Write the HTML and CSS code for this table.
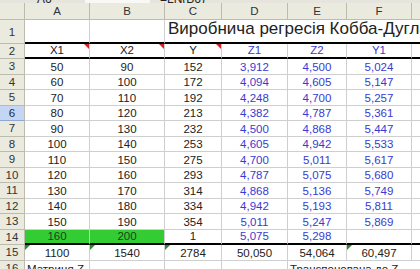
FILE: index.html
```html
<!DOCTYPE html>
<html>
<head>
<meta charset="utf-8">
<link rel="stylesheet" href="styles.css">
</head>
<body>
<div class="fbar">
  <span class="fb-name">A6</span>
  <span class="fb-box"></span>
  <span class="fb-formula">=LN(B6)</span>
</div>
<div class="sheet">
  <div class="corner"></div>
  <div class="ch">A</div><div class="ch">B</div><div class="ch">C</div><div class="ch">D</div><div class="ch">E</div><div class="ch">F</div><div class="ch last"></div>

  <div class="rh">1</div>
  <div class="c r1"></div><div class="c r1"></div>
  <div class="c r1 title">Виробнича регресія Кобба-Дуглас</div>

  <div class="rh">2</div>
  <div class="c r2 note">X1</div><div class="c r2 note">X2</div><div class="c r2 note">Y</div>
  <div class="c r2 blue">Z1</div><div class="c r2 blue">Z2</div><div class="c r2 blue">Y1</div><div class="c r2"></div>

  <div class="rh">3</div>
  <div class="c">50</div><div class="c">90</div><div class="c">152</div><div class="c blue">3,912</div><div class="c blue">4,500</div><div class="c blue">5,024</div><div class="c"></div>
  <div class="rh">4</div>
  <div class="c">60</div><div class="c">100</div><div class="c">172</div><div class="c blue">4,094</div><div class="c blue">4,605</div><div class="c blue">5,147</div><div class="c"></div>
  <div class="rh">5</div>
  <div class="c">70</div><div class="c">110</div><div class="c">192</div><div class="c blue">4,248</div><div class="c blue">4,700</div><div class="c blue">5,257</div><div class="c"></div>
  <div class="rh sel">6</div>
  <div class="c">80</div><div class="c">120</div><div class="c">213</div><div class="c blue">4,382</div><div class="c blue">4,787</div><div class="c blue">5,361</div><div class="c"></div>
  <div class="rh">7</div>
  <div class="c">90</div><div class="c">130</div><div class="c">232</div><div class="c blue">4,500</div><div class="c blue">4,868</div><div class="c blue">5,447</div><div class="c"></div>
  <div class="rh">8</div>
  <div class="c">100</div><div class="c">140</div><div class="c">253</div><div class="c blue">4,605</div><div class="c blue">4,942</div><div class="c blue">5,533</div><div class="c"></div>
  <div class="rh">9</div>
  <div class="c">110</div><div class="c">150</div><div class="c">275</div><div class="c blue">4,700</div><div class="c blue">5,011</div><div class="c blue">5,617</div><div class="c"></div>
  <div class="rh">10</div>
  <div class="c">120</div><div class="c">160</div><div class="c">293</div><div class="c blue">4,787</div><div class="c blue">5,075</div><div class="c blue">5,680</div><div class="c"></div>
  <div class="rh">11</div>
  <div class="c">130</div><div class="c">170</div><div class="c">314</div><div class="c blue">4,868</div><div class="c blue">5,136</div><div class="c blue">5,749</div><div class="c"></div>
  <div class="rh">12</div>
  <div class="c">140</div><div class="c">180</div><div class="c">334</div><div class="c blue">4,942</div><div class="c blue">5,193</div><div class="c blue">5,811</div><div class="c"></div>
  <div class="rh">13</div>
  <div class="c">150</div><div class="c">190</div><div class="c">354</div><div class="c blue">5,011</div><div class="c blue">5,247</div><div class="c blue">5,869</div><div class="c"></div>
  <div class="rh">14</div>
  <div class="c r14 green">160</div><div class="c r14 green">200</div><div class="c r14">1</div><div class="c r14 blue">5,075</div><div class="c r14 blue">5,298</div><div class="c r14"></div><div class="c r14"></div>
  <div class="rh">15</div>
  <div class="c err">1100</div><div class="c err">1540</div><div class="c err">2784</div><div class="c">50,050</div><div class="c">54,064</div><div class="c err">60,497</div><div class="c"></div>
  <div class="rh">16</div>
  <div class="c left">Матриця Z</div><div class="c"></div><div class="c"></div><div class="c"></div>
  <div class="c left wide">Транспонована до Z</div>
</div>
</body>
</html>
```

FILE: styles.css
```css
html, body {
  margin: 0;
  padding: 0;
  background: #ffffff;
  overflow: hidden;
  width: 420px;
  height: 269px;
}

.fbar {
  height: 3px;
  overflow: hidden;
  background: #e6e4dc;
  display: flex;
  align-items: flex-end;
  font-family: "Liberation Sans", Arial, sans-serif;
  font-size: 12px;
  line-height: 8px;
  color: #222;
}

.fb-name {
  margin-left: 37px;
  width: 48px;
}

.fb-box {
  width: 65px;
  height: 3px;
  background: #f8f8f6;
}

.fb-formula {
  margin-left: 10px;
}

.sheet {
  display: grid;
  grid-template-columns: 25px 65px 75px 57px 66px 59px 65px 60px;
  grid-template-rows: 17px 24px 15px repeat(13, 15.5px) 16px;
  font-family: "Liberation Sans", Arial, sans-serif;
  font-size: 11.5px;
  color: #222;
}

.corner,
.ch,
.rh {
  background: #ebeadf;
  border-right: 1px solid #bdbbab;
  border-bottom: 1px solid #bdbbab;
  box-sizing: border-box;
  color: #333;
  display: flex;
  align-items: center;
  justify-content: center;
}

.ch.last {
  border-right: none;
}

.rh.sel {
  background: #c4d6f3;
  border-bottom-color: #8fa8d0;
  color: #1a2a50;
}

.c {
  position: relative;
  box-sizing: border-box;
  border-right: 1px solid #cfcfcf;
  border-bottom: 1px solid #cfcfcf;
  display: flex;
  align-items: flex-end;
  justify-content: center;
  line-height: 13px;
  white-space: nowrap;
}

.c.left {
  justify-content: flex-start;
  padding-left: 2px;
}

.c.wide {
  grid-column: span 3;
  border-right: none;
}

.r1 {
  border-bottom: 2px solid #000;
}

.title {
  grid-column: 4 / -1;
  justify-content: flex-start;
  padding-left: 3px;
  padding-bottom: 4px;
  font-size: 17px;
  line-height: 18px;
  overflow: hidden;
  border-right: none;
}

.r2 {
  border-bottom: 2px solid #000;
}

.r14 {
  border-bottom: 2px solid #000;
}

.blue {
  color: #3a3ad2;
}

.green {
  background: #33cc33;
  color: #1e3f1e;
}

.note::after {
  content: "";
  position: absolute;
  top: 0;
  right: 0;
  border-top: 5px solid #d42020;
  border-left: 5px solid transparent;
}

.err::before {
  content: "";
  position: absolute;
  top: 0;
  left: 0;
  border-top: 5px solid #2a8a2a;
  border-right: 5px solid transparent;
}
```
